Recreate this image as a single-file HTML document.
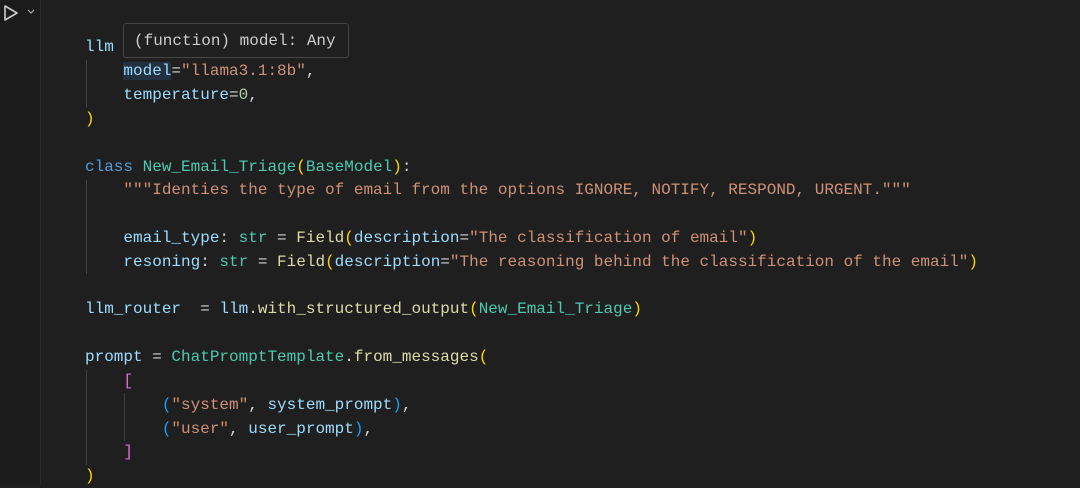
<!DOCTYPE html>
<html><head><style>
body{margin:0;width:1080px;height:485px;background:#1f1f1f;overflow:hidden;position:relative;font-family:"Liberation Mono",monospace}
.gut{position:absolute;left:0;top:0;width:40px;height:485px;background:#1b1b1b;border-right:1px solid #2b2b2b}
.l{position:absolute;left:85px;font-size:16px;white-space:pre;color:#d4d4d4;line-height:24px}
.v{color:#9cdcfe}.k{color:#569cd6}.c{color:#4ec9b0}.f{color:#dcdcaa}.s{color:#ce9178}.n{color:#b5cea8}.y{color:#ffd700}.p{color:#da70d6}.b{color:#179fff}
.g{position:absolute;width:1px;background:#404040}
.tip{position:absolute;left:123px;top:23px;width:226px;height:35px;background:#202020;border:1px solid #454545;border-radius:3px;color:#cccccc;font-size:16px;line-height:35px;padding-left:10px;box-sizing:border-box;white-space:pre}
</style></head><body>
<div class="gut"></div>
<svg style="position:absolute;left:2px;top:3px" width="40" height="20"><path d="M3 3 L3 17 L15 10 Z" fill="none" stroke="#cccccc" stroke-width="1.6" stroke-linejoin="round"/><path d="M26 7 L29 10 L32 7" fill="none" stroke="#aaaaaa" stroke-width="1.2"/></svg>
<div class="g" style="left:86px;top:60px;height:48px"></div>
<div class="g" style="left:86px;top:180px;height:94px"></div>
<div class="g" style="left:86px;top:370px;height:95px"></div>
<div class="g" style="left:124px;top:393px;height:48px"></div>
<div class="l" style="top:35px"><span class="v">llm</span></div>
<div class="l" style="top:59px">    <span class="v" style="background:#233040">model</span>=<span class="s">"llama3.1:8b"</span>,</div>
<div class="l" style="top:83px">    <span class="v">temperature</span>=<span class="n">0</span>,</div>
<div class="l" style="top:107px"><span class="y">)</span></div>
<div class="l" style="top:155px"><span class="k">class</span> <span class="c">New_Email_Triage</span><span class="y">(</span><span class="c">BaseModel</span><span class="y">)</span>:</div>
<div class="l" style="top:178px">    <span class="s">"""Identies the type of email from the options IGNORE, NOTIFY, RESPOND, URGENT."""</span></div>
<div class="l" style="top:226px">    <span class="v">email_type</span>: <span class="c">str</span> = <span class="f">Field</span><span class="y">(</span><span class="v">description</span>=<span class="s">"The classification of email"</span><span class="y">)</span></div>
<div class="l" style="top:250px">    <span class="v">resoning</span>: <span class="c">str</span> = <span class="f">Field</span><span class="y">(</span><span class="v">description</span>=<span class="s">"The reasoning behind the classification of the email"</span><span class="y">)</span></div>
<div class="l" style="top:297px"><span class="v">llm_router</span>  = <span class="v">llm</span>.<span class="f">with_structured_output</span><span class="y">(</span><span class="c">New_Email_Triage</span><span class="y">)</span></div>
<div class="l" style="top:345px"><span class="v">prompt</span> = <span class="c">ChatPromptTemplate</span>.<span class="f">from_messages</span><span class="y">(</span></div>
<div class="l" style="top:369px">    <span class="p">[</span></div>
<div class="l" style="top:393px">        <span class="b">(</span><span class="s">"system"</span>, <span class="v">system_prompt</span><span class="b">)</span>,</div>
<div class="l" style="top:417px">        <span class="b">(</span><span class="s">"user"</span>, <span class="v">user_prompt</span><span class="b">)</span>,</div>
<div class="l" style="top:440px">    <span class="p">]</span></div>
<div class="l" style="top:464px"><span class="y">)</span></div>
<div class="tip">(function) model: Any</div>
</body></html>
